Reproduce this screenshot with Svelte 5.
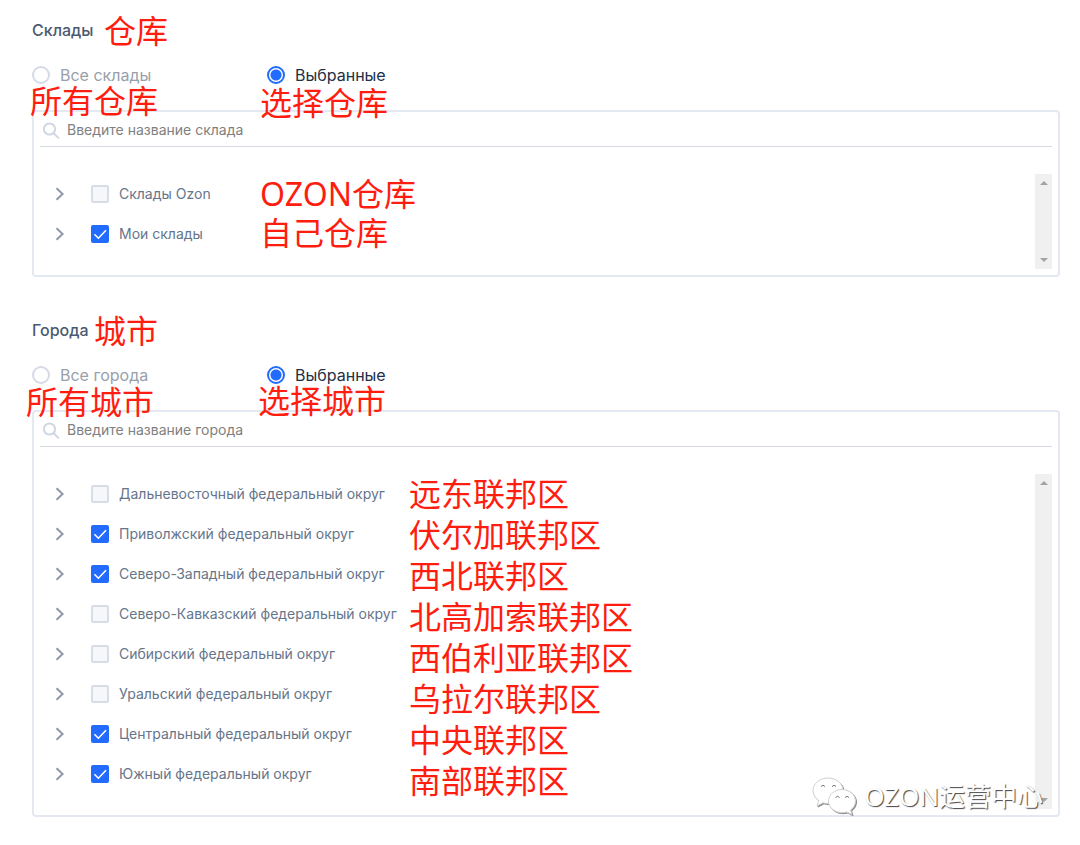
<script>
  let sections = $state([
    {
      id: 'warehouses',
      title: 'Склады',
      all: 'Все склады',
      placeholder: 'Введите название склада',
      mode: 'selected',
      items: [
        { label: 'Склады Ozon', checked: false },
        { label: 'Мои склады', checked: true }
      ],
      notes: [
        { text: '仓库', x: 104, y: 10 },
        { text: '所有仓库', x: 30, y: 80 },
        { text: '选择仓库', x: 260, y: 82 },
        { text: 'OZON仓库', x: 260, y: 173 },
        { text: '自己仓库', x: 260, y: 212 }
      ]
    },
    {
      id: 'cities',
      title: 'Города',
      all: 'Все города',
      placeholder: 'Введите название города',
      mode: 'selected',
      items: [
        { label: 'Дальневосточный федеральный округ', checked: false },
        { label: 'Приволжский федеральный округ', checked: true },
        { label: 'Северо-Западный федеральный округ', checked: true },
        { label: 'Северо-Кавказский федеральный округ', checked: false },
        { label: 'Сибирский федеральный округ', checked: false },
        { label: 'Уральский федеральный округ', checked: false },
        { label: 'Центральный федеральный округ', checked: true },
        { label: 'Южный федеральный округ', checked: true }
      ],
      notes: [
        { text: '城市', x: 94, y: 10 },
        { text: '所有城市', x: 26, y: 81 },
        { text: '选择城市', x: 258, y: 80 },
        { text: '远东联邦区', x: 409, y: 173 },
        { text: '伏尔加联邦区', x: 409, y: 214 },
        { text: '西北联邦区', x: 409, y: 255 },
        { text: '北高加索联邦区', x: 409, y: 296 },
        { text: '西伯利亚联邦区', x: 409, y: 337 },
        { text: '乌拉尔联邦区', x: 409, y: 378 },
        { text: '中央联邦区', x: 409, y: 419 },
        { text: '南部联邦区', x: 409, y: 460 }
      ]
    }
  ]);
</script>

<main class="page">
  {#each sections as section (section.id)}
    <section class="filter">
      <h2 class="filter__title">{section.title}</h2>

      <div class="filter__modes" role="radiogroup" aria-label={section.title}>
        <label class="radio">
          <input type="radio" name={section.id} value="all" bind:group={section.mode} />
          <span>{section.all}</span>
        </label>
        <label class="radio">
          <input type="radio" name={section.id} value="selected" bind:group={section.mode} />
          <span>Выбранные</span>
        </label>
      </div>

      <div class="panel">
        <div class="search">
          <svg viewBox="0 0 18 18" width="18" height="18" aria-hidden="true">
            <circle cx="7.500" cy="7" r="5.600" />
            <path d="M11.700 11.200l5.200 5.200" />
          </svg>
          <input type="text" aria-label={section.placeholder} placeholder={section.placeholder} />
        </div>

        <div class="tree">
          <ul class="tree__list">
            {#each section.items as item}
              <li class="tree__row">
                <button class="tree__toggle" aria-label="Развернуть">
                  <svg viewBox="0 0 10 16" width="10" height="16" aria-hidden="true">
                    <path d="M1.500 2.200L7.600 8l-6.100 5.800" />
                  </svg>
                </button>
                <label class="check">
                  <input type="checkbox" bind:checked={item.checked} />
                  <svg viewBox="0 0 18 18" width="18" height="18" aria-hidden="true">
                    <path d="M3.400 9.200l4 4 7.600-8" />
                  </svg>
                  <span>{item.label}</span>
                </label>
              </li>
            {/each}
          </ul>
          <div class="scroll" aria-hidden="true">
            <span class="scroll__up"></span>
            <span class="scroll__down"></span>
          </div>
        </div>
      </div>

      {#each section.notes as note}
        <span class="note" style="left: {note.x}px; top: {note.y}px">{note.text}</span>
      {/each}
    </section>
  {/each}

  <div class="mark">
    <svg viewBox="0 0 46 38" width="46" height="38" aria-hidden="true">
      <path d="M16 1C7.700 1 1 6.600 1 13.600c0 4 2.200 7.500 5.700 9.900L5 29l6-3.200c1.600.4 3.300.7 5 .7 8.300 0 15-5.700 15-12.900S24.300 1 16 1z" />
      <path d="M30 12.500c-7.500 0-13.500 5.200-13.500 11.600S22.500 35.700 30 35.700c1.700 0 3.300-.2 4.700-.7l5.300 2.600-1.400-4.600c3-2.100 4.900-5.300 4.900-8.900 0-6.400-6-11.600-13.500-11.600z" />
      <path class="mark__eyes" d="M9 9.500q2-2.500 4 0M20 9.500q2-2.500 4 0M23.500 20.500q2-2.500 4 0M33 20.500q2-2.500 4 0" />
    </svg>
    <span>OZON运营中心</span>
  </div>
</main>

<style>
  :global(body) {
    margin: 0;
    background: #ffffff;
  }

  .page {
    --color-border: #e4e8f1;
    --color-line: #d5dae5;
    --color-blue: #216bff;
    --color-note: #ff1d10;
    --font-note: "Noto Sans", "Noto Sans CJK SC", sans-serif;
    position: relative;
    padding-bottom: 28px;
    font-family: Inter, "Noto Sans CJK SC", sans-serif;
  }

  .filter {
    position: relative;
    padding: 20px 20px 0 32px;
  }

  .filter + .filter {
    margin-top: 23px;
  }

  .filter__title {
    margin: 0;
    font-size: 16px;
    font-weight: 500;
    line-height: 20px;
    color: #4a5a70;
  }

  .filter__modes {
    display: flex;
    margin-top: 24px;
    height: 46px;
  }

  .radio {
    display: flex;
    align-items: center;
    gap: 10px;
    width: 235px;
    height: 22px;
    font-size: 16px;
    line-height: 22px;
    color: #98a0ac;
  }

  .radio input {
    appearance: none;
    flex: none;
    box-sizing: border-box;
    width: 18px;
    height: 18px;
    margin: 0;
    border: 2px solid var(--color-line);
    border-radius: 50%;
    background: #ffffff;
  }

  .radio input:checked {
    border-color: var(--color-blue);
    background: radial-gradient(circle, var(--color-blue) 5px, #ffffff 6px);
  }

  .radio input:checked + span {
    color: #222f45;
  }

  .panel {
    padding: 0 6px 6px;
    border: 2px solid var(--color-border);
    border-radius: 4px;
  }

  .search {
    display: flex;
    align-items: center;
    gap: 7px;
    height: 34px;
    padding-left: 2px;
    border-bottom: 1px solid var(--color-line);
  }

  .search svg {
    margin-top: 3px;
    fill: none;
    stroke: #d0d6e2;
    stroke-width: 2;
  }

  .search input {
    flex: 1;
    min-width: 0;
    height: 30px;
    padding: 0;
    border: none;
    outline: none;
    background: none;
    font-family: inherit;
    font-size: 14px;
    color: #4a5a70;
  }

  .search input::placeholder {
    color: #808080;
    opacity: 1;
  }

  .tree {
    display: flex;
    margin-top: 27px;
  }

  .tree__list {
    flex: 1;
    margin: 0;
    padding: 0 0 15px;
    list-style: none;
  }

  .tree__row {
    display: flex;
    align-items: center;
    height: 40px;
    padding-left: 15px;
  }

  .tree__toggle {
    display: flex;
    width: 36px;
    padding: 0;
    border: none;
    background: none;
  }

  .tree__toggle svg {
    fill: none;
    stroke: #8f98aa;
    stroke-width: 2;
  }

  .check {
    position: relative;
    display: flex;
    align-items: center;
    gap: 10px;
    font-size: 14px;
    line-height: 20px;
    color: #66758a;
  }

  .check input {
    appearance: none;
    box-sizing: border-box;
    width: 18px;
    height: 18px;
    margin: 0;
    border: 2px solid #d9dde6;
    border-radius: 2px;
    background: #f5f7fb;
  }

  .check input:checked {
    border-color: var(--color-blue);
    background: var(--color-blue);
  }

  .check svg {
    position: absolute;
    left: 0;
    display: none;
    fill: none;
    stroke: #ffffff;
    stroke-width: 1.6;
    pointer-events: none;
  }

  .check input:checked + svg {
    display: block;
  }

  .scroll {
    display: flex;
    flex-direction: column;
    align-items: center;
    justify-content: space-between;
    box-sizing: border-box;
    width: 17px;
    padding: 7px 0;
    background: #f0f0f0;
  }

  .scroll__up,
  .scroll__down {
    border: 4px solid transparent;
  }

  .scroll__up {
    border-top: none;
    border-bottom-color: #a3a3a3;
  }

  .scroll__down {
    border-bottom: none;
    border-top-color: #a3a3a3;
  }

  .note {
    position: absolute;
    font-family: var(--font-note);
    font-size: 32px;
    line-height: 41px;
    color: var(--color-note);
    white-space: nowrap;
    pointer-events: none;
  }

  .mark {
    position: absolute;
    right: 37px;
    bottom: 30px;
    display: flex;
    align-items: center;
    gap: 6px;
    font-family: var(--font-note);
    font-size: 26px;
    line-height: 38px;
    color: #ffffff;
    text-shadow: 1px 1px 1px #444444;
  }

  .mark svg {
    fill: #ffffff;
    stroke: #d0d0d0;
    stroke-width: 1;
    filter: drop-shadow(1px 1px 0 #888888);
  }

  .mark svg .mark__eyes {
    fill: none;
    stroke: #777777;
  }
</style>
